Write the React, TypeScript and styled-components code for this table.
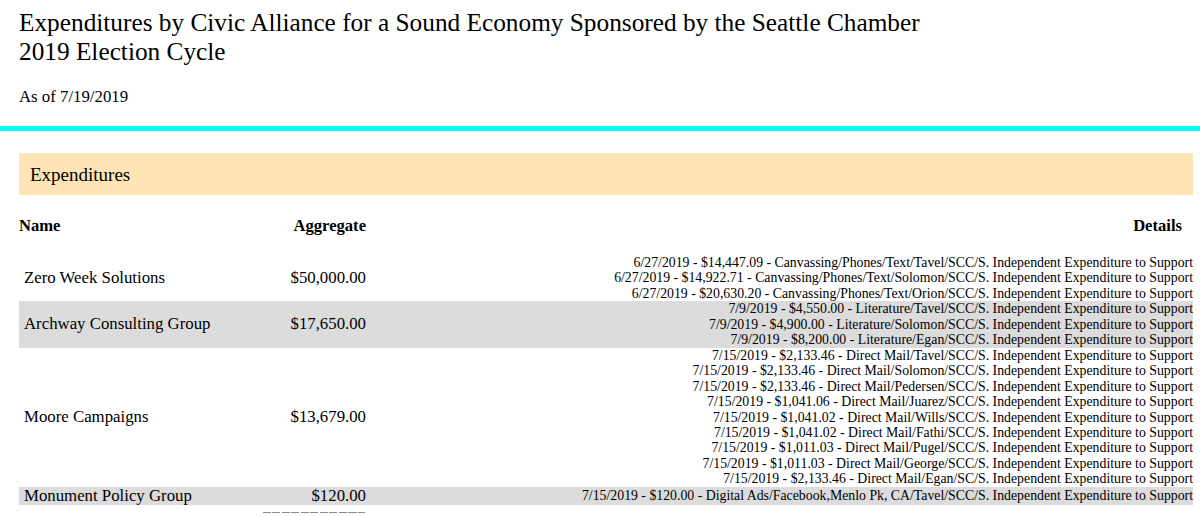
import { createGlobalStyle, styled } from "styled-components";

const GlobalStyle = createGlobalStyle`
  body {
    margin: 0;
    background: #ffffff;
    color: #000000;
    font-family: "Liberation Serif", "Times New Roman", serif;
  }
`;

const Header = styled("div")`
  padding: 8px 7px 0 19px;
`;

const Title = styled("h1")`
  margin: 0;
  font-size: 25.3px;
  font-weight: 400;
  line-height: 29px;
`;

const AsOf = styled("p")`
  margin: 22px 0 0;
  font-size: 16.8px;
  line-height: 18px;
`;

const Rule = styled("div")`
  height: 5px;
  margin-top: 20px;
  background: #00ffff;
`;

const Section = styled("div")`
  padding: 22px 7px 0 19px;
`;

const Banner = styled("div")`
  background: #ffe4b5;
  padding: 10px 11px 9px;
  font-size: 19px;
  line-height: 23px;
`;

const Table = styled("table")`
  width: 100%;
  margin-top: 22px;
  border-collapse: collapse;
  table-layout: fixed;
`;

const Row = styled("tr")<{ $shaded?: boolean }>`
  background: ${(p) => (p.$shaded ? "#dcdcdc" : "transparent")};
`;

const Th = styled("th")<{ $align: "left" | "right"; $padRight?: number }>`
  padding: 0 ${(p) => p.$padRight ?? 0}px 20px 0;
  font-size: 16.6px;
  line-height: 18px;
  font-weight: 700;
  text-align: ${(p) => p.$align};
  vertical-align: top;
`;

const NameCell = styled("td")`
  padding: 0 0 0 5px;
  font-size: 16.8px;
  line-height: 18.4px;
  vertical-align: middle;
`;

const AmountCell = styled("td")`
  padding: 0;
  font-size: 16.8px;
  line-height: 18.4px;
  text-align: right;
  vertical-align: middle;
`;

const DetailCell = styled("td")`
  padding: 0;
  font-size: 13.8px;
  line-height: 15.45px;
  text-align: right;
  vertical-align: middle;
`;

const DetailLine = styled("div")`
  white-space: nowrap;
`;

const TotalLine = styled("div")`
  height: 1px;
  margin-top: 6px;
  background: repeating-linear-gradient(
    to right,
    #8c8c8c 0,
    #8c8c8c 8px,
    transparent 8px,
    transparent 9.5px
  );
`;

const S = "SCC/S. Independent Expenditure to Support";

const rows = [
  {
    name: "Zero Week Solutions",
    amount: "$50,000.00",
    details: [
      `6/27/2019 - $14,447.09 - Canvassing/Phones/Text/Tavel/${S}`,
      `6/27/2019 - $14,922.71 - Canvassing/Phones/Text/Solomon/${S}`,
      `6/27/2019 - $20,630.20 - Canvassing/Phones/Text/Orion/${S}`,
    ],
  },
  {
    name: "Archway Consulting Group",
    amount: "$17,650.00",
    details: [
      `7/9/2019 - $4,550.00 - Literature/Tavel/${S}`,
      `7/9/2019 - $4,900.00 - Literature/Solomon/${S}`,
      `7/9/2019 - $8,200.00 - Literature/Egan/${S}`,
    ],
  },
  {
    name: "Moore Campaigns",
    amount: "$13,679.00",
    details: [
      `7/15/2019 - $2,133.46 - Direct Mail/Tavel/${S}`,
      `7/15/2019 - $2,133.46 - Direct Mail/Solomon/${S}`,
      `7/15/2019 - $2,133.46 - Direct Mail/Pedersen/${S}`,
      `7/15/2019 - $1,041.06 - Direct Mail/Juarez/${S}`,
      `7/15/2019 - $1,041.02 - Direct Mail/Wills/${S}`,
      `7/15/2019 - $1,041.02 - Direct Mail/Fathi/${S}`,
      `7/15/2019 - $1,011.03 - Direct Mail/Pugel/${S}`,
      `7/15/2019 - $1,011.03 - Direct Mail/George/${S}`,
      `7/15/2019 - $2,133.46 - Direct Mail/Egan/SC/S. Independent Expenditure to Support`,
    ],
  },
  {
    name: "Monument Policy Group",
    amount: "$120.00",
    details: [
      `7/15/2019 - $120.00 - Digital Ads/Facebook,Menlo Pk, CA/Tavel/${S}`,
    ],
  },
];

export default function App() {
  return (
    <>
      <GlobalStyle />
      <Header>
        <Title>
          Expenditures by Civic Alliance for a Sound Economy Sponsored by the Seattle Chamber
          <br />
          2019 Election Cycle
        </Title>
        <AsOf>As of 7/19/2019</AsOf>
      </Header>
      <Rule />
      <Section>
        <Banner>Expenditures</Banner>
        <Table>
          <colgroup>
            <col style={{ width: 243 }} />
            <col style={{ width: 104 }} />
            <col />
          </colgroup>
          <thead>
            <tr>
              <Th $align="left">Name</Th>
              <Th $align="right">Aggregate</Th>
              <Th $align="right" $padRight={11}>Details</Th>
            </tr>
          </thead>
          <tbody>
            {rows.map((r, i) => (
              <Row key={r.name} $shaded={i % 2 === 1}>
                <NameCell>{r.name}</NameCell>
                <AmountCell>{r.amount}</AmountCell>
                <DetailCell>
                  {r.details.map((d, j) => (
                    <DetailLine key={j}>{d}</DetailLine>
                  ))}
                </DetailCell>
              </Row>
            ))}
            <tr>
              <td />
              <td>
                <TotalLine />
              </td>
              <td />
            </tr>
          </tbody>
        </Table>
      </Section>
    </>
  );
}
